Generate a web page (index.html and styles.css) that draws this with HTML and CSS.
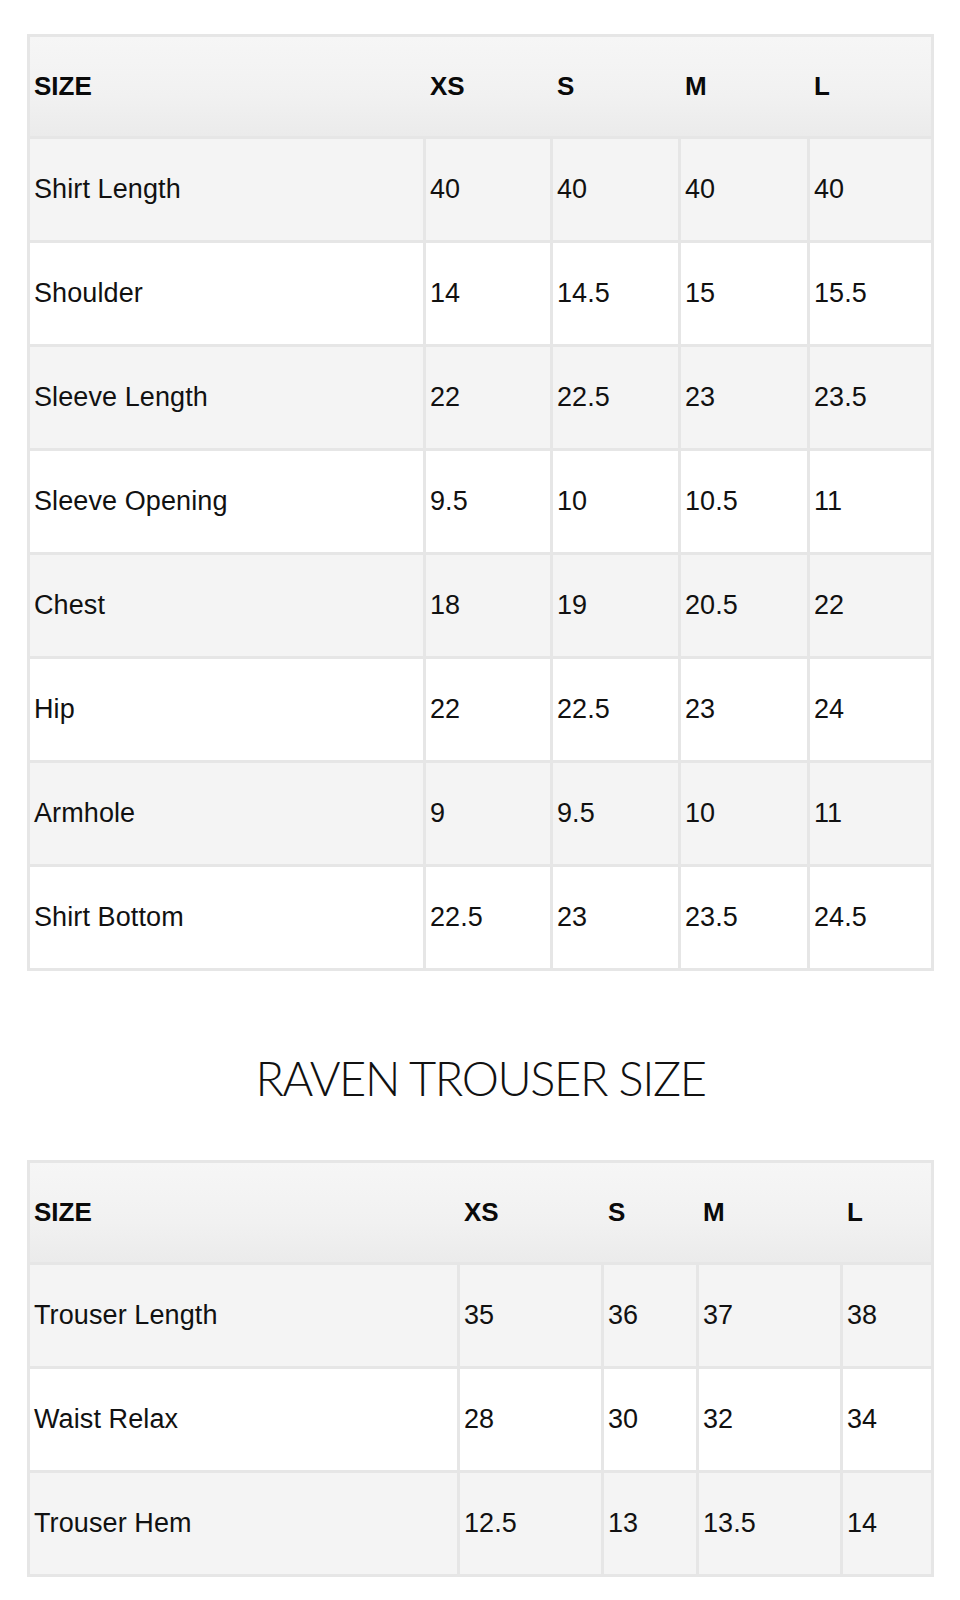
FILE: index.html
```html
<!DOCTYPE html>
<html lang="en">
<head>
<meta charset="utf-8">
<title>Raven Size Chart</title>
<link rel="stylesheet" href="styles.css">
</head>
<body>
<div class="page">
  <div class="chart chart-shirt">
    <div class="head">
      <div class="hc">SIZE</div><div class="hc">XS</div><div class="hc">S</div><div class="hc">M</div><div class="hc">L</div>
    </div>
    <div class="c alt">Shirt Length</div><div class="c alt">40</div><div class="c alt">40</div><div class="c alt">40</div><div class="c alt">40</div>
    <div class="c">Shoulder</div><div class="c">14</div><div class="c">14.5</div><div class="c">15</div><div class="c">15.5</div>
    <div class="c alt">Sleeve Length</div><div class="c alt">22</div><div class="c alt">22.5</div><div class="c alt">23</div><div class="c alt">23.5</div>
    <div class="c">Sleeve Opening</div><div class="c">9.5</div><div class="c">10</div><div class="c">10.5</div><div class="c">11</div>
    <div class="c alt">Chest</div><div class="c alt">18</div><div class="c alt">19</div><div class="c alt">20.5</div><div class="c alt">22</div>
    <div class="c">Hip</div><div class="c">22</div><div class="c">22.5</div><div class="c">23</div><div class="c">24</div>
    <div class="c alt">Armhole</div><div class="c alt">9</div><div class="c alt">9.5</div><div class="c alt">10</div><div class="c alt">11</div>
    <div class="c">Shirt Bottom</div><div class="c">22.5</div><div class="c">23</div><div class="c">23.5</div><div class="c">24.5</div>
  </div>

  <h2 class="title">RAVEN TROUSER SIZE</h2>

  <div class="chart chart-trouser">
    <div class="head">
      <div class="hc">SIZE</div><div class="hc">XS</div><div class="hc">S</div><div class="hc">M</div><div class="hc">L</div>
    </div>
    <div class="c alt">Trouser Length</div><div class="c alt">35</div><div class="c alt">36</div><div class="c alt">37</div><div class="c alt">38</div>
    <div class="c">Waist Relax</div><div class="c">28</div><div class="c">30</div><div class="c">32</div><div class="c">34</div>
    <div class="c alt">Trouser Hem</div><div class="c alt">12.5</div><div class="c alt">13</div><div class="c alt">13.5</div><div class="c alt">14</div>
  </div>
</div>
</body>
</html>
```

FILE: styles.css
```css
html, body {
  margin: 0;
  padding: 0;
  background: #ffffff;
}

.page {
  padding: 34px 0 0 27px;
  font-family: "Liberation Sans", Arial, Helvetica, sans-serif;
  color: #111111;
}

.chart {
  display: grid;
  width: 907px;
  box-sizing: border-box;
  padding: 3px;
  gap: 3px;
  background: #e6e6e6;
  grid-template-rows: 99px;
  grid-auto-rows: 101px;
}

.chart-shirt {
  grid-template-columns: 393px 124px 125px 126px 121px;
}

.chart-trouser {
  grid-template-columns: 427px 141px 92px 141px 88px;
}

.head {
  grid-column: 1 / -1;
  display: grid;
  grid-template-columns: subgrid;
  background: linear-gradient(to bottom, #f6f6f6 0%, #f1f1f1 60%, #ebebeb 100%);
}

.hc {
  display: flex;
  align-items: center;
  padding-left: 4px;
  font-weight: bold;
  font-size: 26px;
  color: #0a0a0a;
}

.c {
  display: flex;
  align-items: center;
  padding-left: 4px;
  font-size: 27px;
  letter-spacing: 0.1px;
  background: #ffffff;
}

.c.alt {
  background: #f4f4f4;
}

.title {
  margin: 0;
  width: 907px;
  padding-top: 77px;
  padding-bottom: 52px;
  line-height: 60px;
  text-align: center;
  font-family: "Lato", "Liberation Sans", sans-serif;
  font-weight: 300;
  font-size: 47px;
  letter-spacing: -1.4px;
  color: #111111;
}
```
